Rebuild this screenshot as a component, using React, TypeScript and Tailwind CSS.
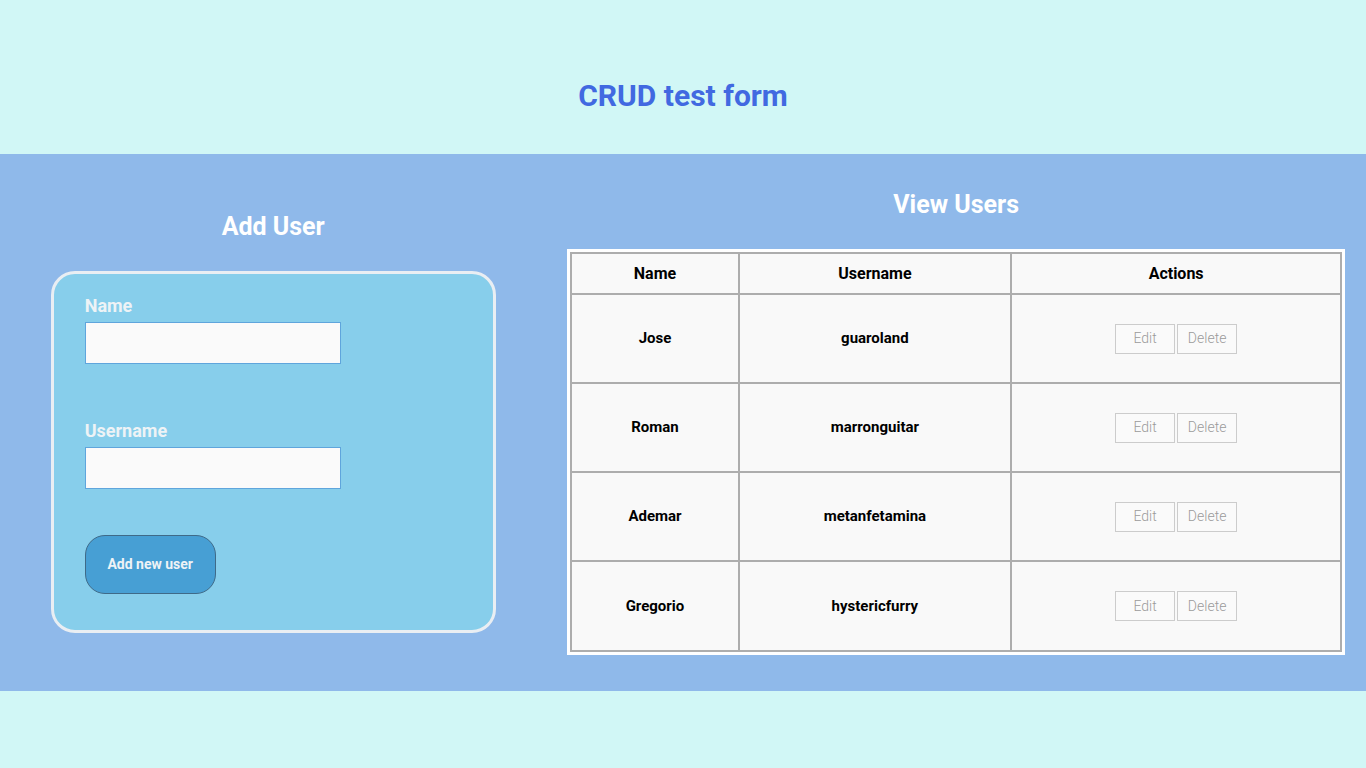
import React from "react";

const users = [
  { name: "Jose", username: "guaroland" },
  { name: "Roman", username: "marronguitar" },
  { name: "Ademar", username: "metanfetamina" },
  { name: "Gregorio", username: "hystericfurry" },
];

const App = () => {
  return (
    <div className="min-h-screen bg-[#d1f7f6] font-['Roboto',sans-serif]">
      {/* Header */}
      <div className="h-[154px] pt-[78px]">
        <h1 className="text-center text-[30px] leading-[36px] font-bold text-[#4169e1]">
          CRUD test form
        </h1>
      </div>
      {/* Main band */}
      <div className="h-[537px] bg-[#8fb9ea] flex items-center">
        <div className="w-2/5 flex flex-col items-center">
          <h2 className="text-[25px] leading-[30px] font-bold text-white mb-[29px]">
            Add User
          </h2>
          <form
            onSubmit={(e) => e.preventDefault()}
            className="w-[445px] bg-[#87ceeb] border-[3px] border-[#e9eef3] rounded-[24px] px-[31px] pt-[22px] pb-[36px]"
          >
            <label className="block text-[18px] leading-[20px] font-bold text-[#eef3f6] mb-[6px]">
              Name
            </label>
            <input
              type="text"
              className="block w-[256px] h-[42px] bg-[#fafafa] border border-[#5fa5dc] outline-none"
            />
            <label className="block mt-[57px] text-[18px] leading-[20px] font-bold text-[#eef3f6] mb-[6px]">
              Username
            </label>
            <input
              type="text"
              className="block w-[256px] h-[42px] bg-[#fafafa] border border-[#5fa5dc] outline-none"
            />
            <button
              type="submit"
              className="mt-[46px] w-[131px] h-[59px] bg-[#479fd4] border border-[#3f6a88] rounded-[20px] text-[14px] font-bold text-[#eef3f6]"
            >
              Add new user
            </button>
          </form>
        </div>
        <div className="w-3/5 flex flex-col items-center">
          <h2 className="text-[25px] leading-[30px] font-bold text-white mb-[29px]">
            View Users
          </h2>
          <div className="border-[3px] border-white bg-white">
            <table className="w-[772px] border-collapse bg-[#f9f9f9] text-[15px]">
              <colgroup>
                <col className="w-[168px]" />
                <col className="w-[273px]" />
                <col className="w-[331px]" />
              </colgroup>
              <thead>
                <tr className="h-[41px]">
                  <th className="border-2 border-[#adadad] text-[16px] font-bold text-black">Name</th>
                  <th className="border-2 border-[#adadad] text-[16px] font-bold text-black">Username</th>
                  <th className="border-2 border-[#adadad] text-[16px] font-bold text-black">Actions</th>
                </tr>
              </thead>
              <tbody>
                {users.map((u, i) => (
                  <tr key={u.username} className={i === users.length - 1 ? "h-[90px]" : "h-[89px]"}>
                    <td className="border-2 border-[#adadad] text-center font-bold text-black">
                      {u.name}
                    </td>
                    <td className="border-2 border-[#adadad] text-center font-bold text-black">
                      {u.username}
                    </td>
                    <td className="border-2 border-[#adadad] text-center">
                      <div className="flex justify-center gap-[2px]">
                        <button className="w-[60px] h-[30px] bg-[#fafafa] border border-[#cccccc] text-[14px] font-light text-[#9a9a9a]">
                          Edit
                        </button>
                        <button className="w-[60px] h-[30px] bg-[#fafafa] border border-[#cccccc] text-[14px] font-light text-[#9a9a9a]">
                          Delete
                        </button>
                      </div>
                    </td>
                  </tr>
                ))}
              </tbody>
            </table>
          </div>
        </div>
      </div>
    </div>
  );
};

export default App;
